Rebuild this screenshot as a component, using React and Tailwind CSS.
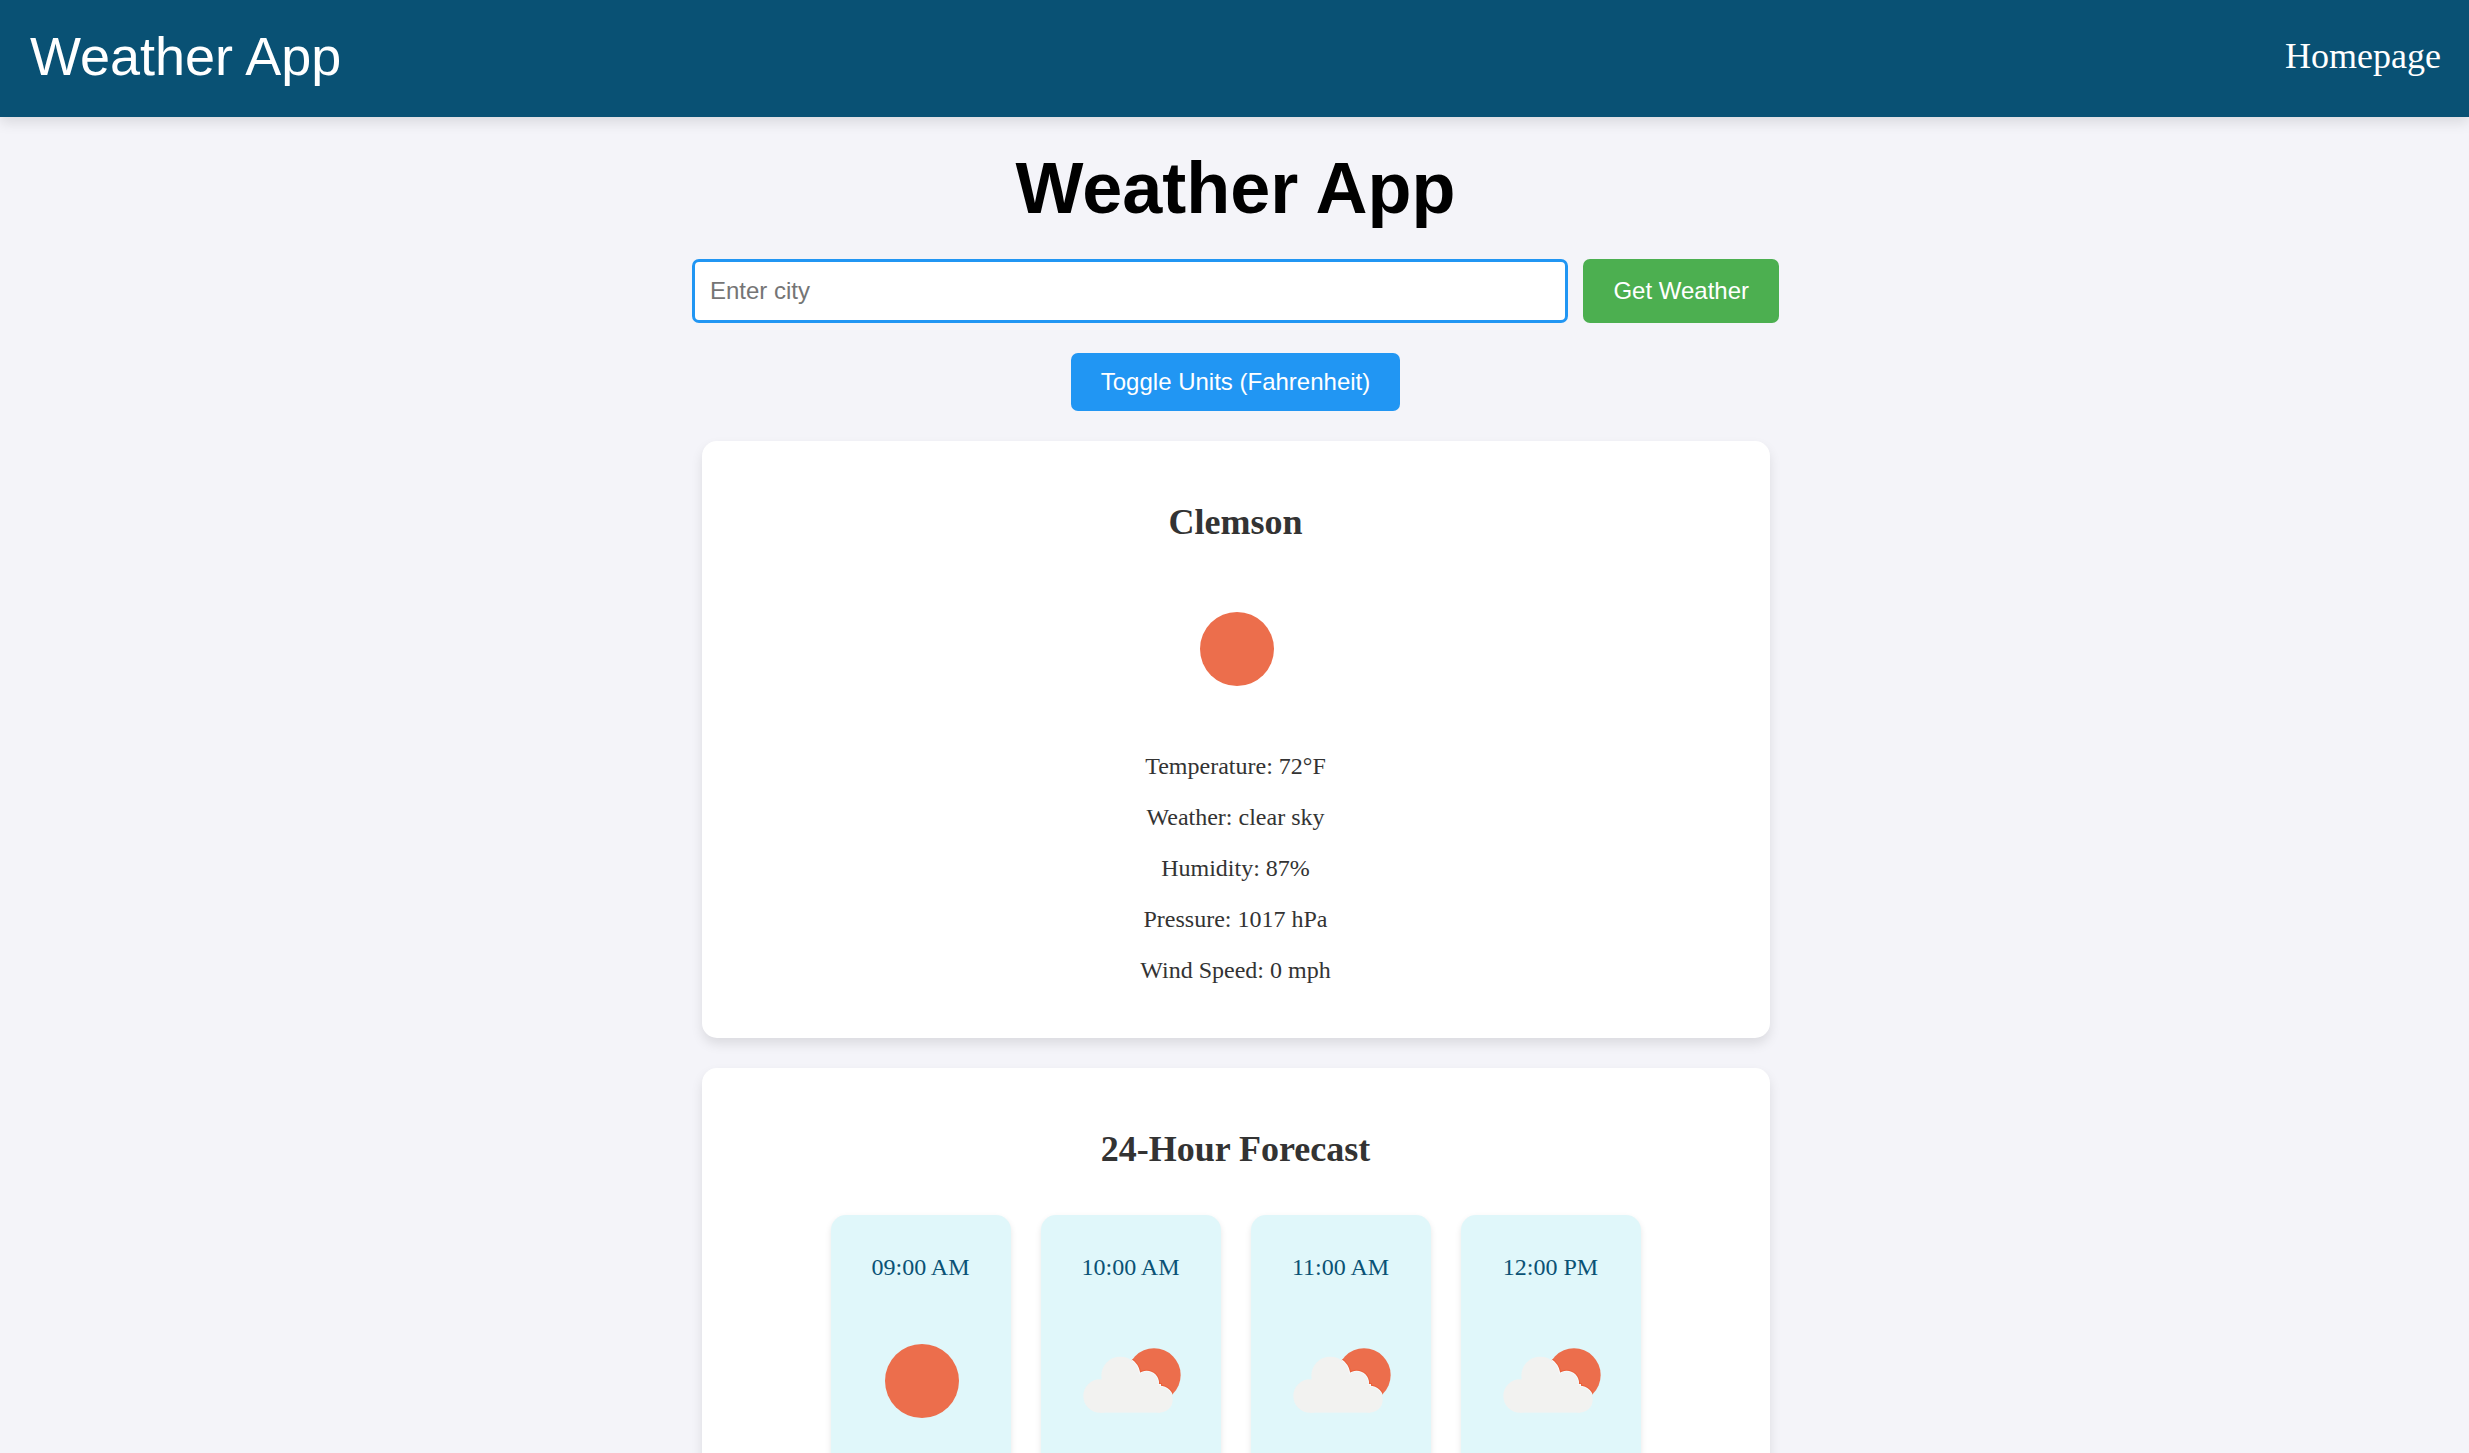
const SANS = "font-['Liberation_Sans',Arial,sans-serif]";

function SunIcon() {
  return (
    <svg viewBox="0 0 150 150" className="block size-[150px]" role="img" aria-label="Clear sky">
      <circle cx="76" cy="76" r="37" fill="#ec6e4c" />
    </svg>
  );
}

function CloudShape(props) {
  return (
    <g {...props}>
      <circle cx="132" cy="273" r="50" />
      <circle cx="193" cy="212" r="57" />
      <circle cx="272" cy="234" r="34" />
      <circle cx="311" cy="284" r="39" />
      <rect x="132" y="240" width="180" height="83" />
    </g>
  );
}

function FewCloudsIcon({ id }) {
  return (
    <svg viewBox="0 0 450 450" className="block size-[150px]" role="img" aria-label="Few clouds">
      <clipPath id={id}>
        <circle cx="294" cy="210" r="80" />
      </clipPath>
      <circle cx="294" cy="210" r="80" fill="#ec6e4c" />
      <g clipPath={`url(#${id})`}>
        <CloudShape fill="#eb6039" stroke="#eb6039" strokeWidth="12" />
        <CloudShape fill="#f5f9fa" stroke="#f5f9fa" strokeWidth="6" />
      </g>
      <CloudShape fill="#f2f2f0" />
    </svg>
  );
}

const conditions = [
  "Temperature: 72°F",
  "Weather: clear sky",
  "Humidity: 87%",
  "Pressure: 1017 hPa",
  "Wind Speed: 0 mph",
];

const hours = [
  { time: "09:00 AM", sky: "clear" },
  { time: "10:00 AM", sky: "few" },
  { time: "11:00 AM", sky: "few" },
  { time: "12:00 PM", sky: "few" },
];

function Card({ title, children }) {
  return (
    <section className="flex w-full max-w-[1068px] flex-col items-center rounded-[15px] bg-white px-[30px] pt-[61px] pb-[54px] text-[#333] shadow-[0_6px_12px_rgba(0,0,0,0.1)]">
      <h2 className="text-4xl leading-[41px] font-bold">{title}</h2>
      {children}
    </section>
  );
}

export default function App() {
  return (
    <div className="h-screen overflow-hidden bg-[#f4f4f9] font-['Liberation_Serif','Times_New_Roman',serif] text-2xl leading-[27px]">
      <header className="flex items-center justify-between bg-[#095174] pt-[25px] pr-7 pb-[30px] pl-[30px] text-white shadow-[0_6px_12px_rgba(0,0,0,0.1)]">
        <div className={`${SANS} text-[54px] leading-[62px]`}>Weather App</div>
        <nav>
          <a href="#" className="block text-4xl leading-[41px]">Homepage</a>
        </nav>
      </header>

      <main className="flex flex-col items-center gap-[30px] pt-[30px] pl-0.5">
        <h1 className={`${SANS} text-7xl leading-[82px] font-bold text-black`}>Weather App</h1>

        <form className={`${SANS} flex w-full max-w-[1087px] gap-[15px]`} onSubmit={(e) => e.preventDefault()}>
          <input
            type="text"
            aria-label="City"
            placeholder="Enter city"
            className="h-16 min-w-0 flex-1 rounded-[7px] border-3 border-[#2196f3] bg-white px-[15px] placeholder:text-[#757575] outline-none"
          />
          <button type="submit" className="rounded-[7px] bg-[#4caf50] px-[30px] pb-0.5 text-white">
            Get Weather
          </button>
        </form>

        <button type="button" className={`${SANS} h-[58px] rounded-[7px] bg-[#2196f3] px-[30px] pb-0.5 text-white`}>
          Toggle Units (Fahrenheit)
        </button>

        <Card title="Clemson">
          <div className="my-[30px]">
            <SunIcon />
          </div>
          <div className="flex flex-col gap-6 text-center">
            {conditions.map((line) => (
              <p key={line}>{line}</p>
            ))}
          </div>
        </Card>

        <Card title="24-Hour Forecast">
          <ul className="mt-[45px] flex justify-center gap-[30px]">
            {hours.map(({ time, sky }) => (
              <li
                key={time}
                className="flex w-[180px] flex-col items-center gap-6 rounded-[15px] bg-[#e0f7fa] px-[15px] pt-[39px] pb-[39px] text-[#0a5275] shadow-[0_3px_6px_rgba(0,0,0,0.1)]"
              >
                <p>{time}</p>
                {sky === "clear" ? <SunIcon /> : <FewCloudsIcon id={`sun-${time.slice(0, 2)}`} />}
              </li>
            ))}
          </ul>
        </Card>
      </main>
    </div>
  );
}
